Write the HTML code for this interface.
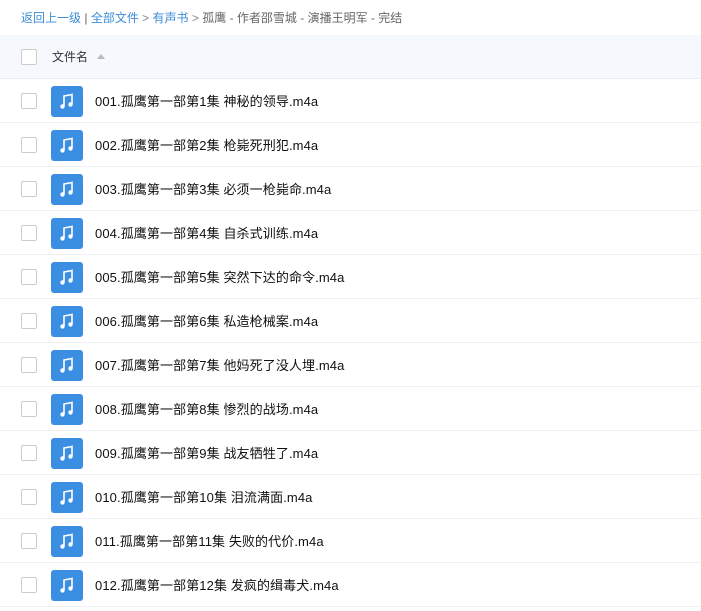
<!DOCTYPE html>
<html><head><meta charset="utf-8"><style>
body{margin:0;width:701px;height:611px;overflow:hidden;background:#fff;font-family:"Liberation Sans","Noto Sans CJK SC",sans-serif;}
.crumb{position:absolute;left:21px;top:9px;font-size:12px;color:#666;white-space:nowrap}
.crumb a{color:#3b8cd8;text-decoration:none}
.crumb .g{color:#888}
.hdr{position:absolute;left:0;top:35px;width:701px;height:44px;background:#f5f8fc;border-bottom:1px solid #e8edf3;box-sizing:border-box}
.cb{position:absolute;left:21px;width:14px;height:14px;border:1px solid #ccc;border-radius:2px;background:#fff}
.row{position:absolute;left:0;width:701px;height:44px;border-bottom:1px solid #eef0f3;box-sizing:border-box}
.ic{position:absolute;left:51px;top:7px;width:32px;height:31px;background:#3b8fe3;border-radius:3px}
.ic svg{position:absolute;left:8px;top:7px}
.t{position:absolute;left:95px;top:12px;font-size:13px;color:#111;white-space:nowrap;letter-spacing:0.1px}
</style></head><body>
<div class="crumb"><a>返回上一级</a> | <a>全部文件</a> <span class="g">&gt;</span> <a>有声书</a> <span class="g">&gt;</span> 孤鹰 - 作者邵雪城 - 演播王明军 - 完结</div>
<div class="hdr"><div class="cb" style="top:14px"></div><span style="position:absolute;left:52px;top:13px;font-size:12px;color:#333">文件名</span><span style="position:absolute;left:97px;top:19px;width:0;height:0;border-left:4px solid transparent;border-right:4px solid transparent;border-bottom:5px solid #bbb"></span></div>
<div id="rows"></div>
<script>
var n=["神秘的领导","枪毙死刑犯","必须一枪毙命","自杀式训练","突然下达的命令","私造枪械案","他妈死了没人埋","惨烈的战场","战友牺牲了","泪流满面","失败的代价","发疯的缉毒犬"];
var h="";for(var i=0;i<12;i++){var k=i+1;var num=("00"+k).slice(-3);
h+='<div class="row" style="top:'+(79+44*i)+'px"><div class="cb" style="top:14px"></div><div class="ic"><svg width="16" height="17" viewBox="0 0 16 17"><path d="M5 13V3l8-1.5V11" fill="none" stroke="#fff" stroke-width="1.6"/><circle cx="3.5" cy="13.5" r="2.2" fill="#fff"/><circle cx="11.5" cy="11.5" r="2.2" fill="#fff"/></svg></div><div class="t">'+num+'.孤鹰第一部第'+k+'集 '+n[i]+'.m4a</div></div>';}
document.getElementById("rows").innerHTML=h;
</script>
</body></html>
